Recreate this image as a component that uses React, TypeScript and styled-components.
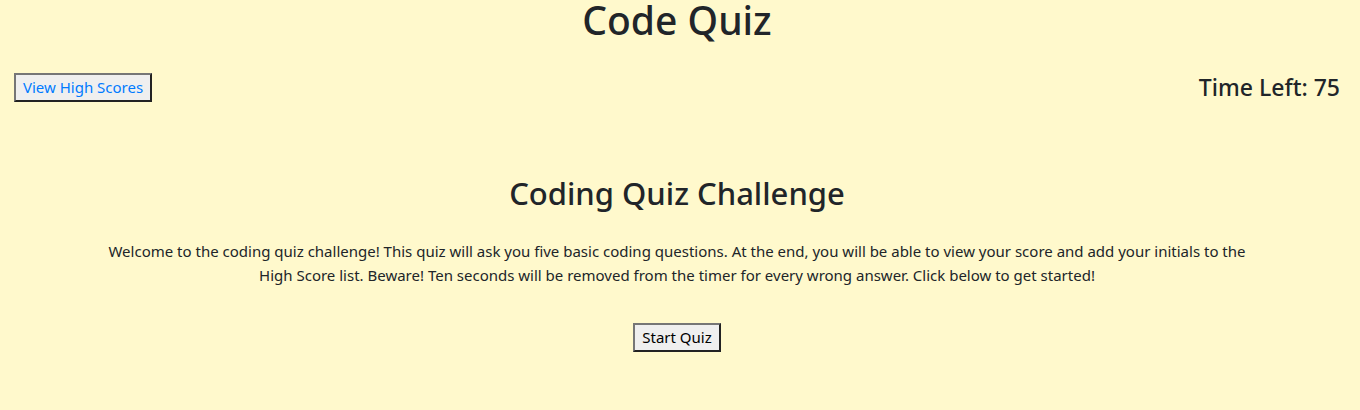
import React from "react";
import styled, { createGlobalStyle } from "styled-components";

const Global = createGlobalStyle`
  html, body {
    margin: 0;
    padding: 0;
    background: #fff9cc;
  }
  body {
    font-family: "Noto Sans", "Open Sans", sans-serif;
    color: #212529;
    font-size: 16px;
  }
`;

const Page = styled.div`
  background: #fff9cc;
  min-height: 410px;
  padding-right: 6px;
  display: flex;
  flex-direction: column;
  align-items: stretch;
`;

const Title = styled.h1`
  margin: 0;
  padding-top: 4px;
  font-size: 39px;
  line-height: 32px;
  font-weight: 500;
  text-align: center;
`;

const TopBar = styled.div`
  margin-top: 37px;
  padding: 0 14px;
  height: 29px;
  display: flex;
  align-items: center;
  justify-content: space-between;
`;

const Button = styled.button<{ $link?: boolean }>`
  font-family: "Noto Sans", "Open Sans", sans-serif;
  font-size: 15px;
  line-height: 21px;
  padding: 2px 7px;
  background: #efefef;
  color: ${(p) => (p.$link ? "#007bff" : "#000")};
  border: 2px solid;
  border-color: #767676 #222 #222 #767676;
  border-radius: 0;
  cursor: pointer;
`;

const Timer = styled.h3`
  margin: 0;
  font-size: 23px;
  line-height: 29px;
  font-weight: 500;
`;

const Section = styled.main`
  margin-top: 72px;
  display: flex;
  flex-direction: column;
  align-items: center;
`;

const Heading = styled.h2`
  margin: 0;
  font-size: 31px;
  line-height: 38px;
  font-weight: 500;
  text-align: center;
`;

const Intro = styled.p`
  margin: 27px 0 0;
  max-width: 1160px;
  font-size: 15px;
  line-height: 24px;
  text-align: center;
`;

const StartRow = styled.div`
  margin-top: 36px;
  display: flex;
  justify-content: center;
`;

export default function App() {
  return (
    <Page>
      <Global />
      <Title>Code Quiz</Title>
      <TopBar>
        <Button $link>View High Scores</Button>
        <Timer>Time Left: 75</Timer>
      </TopBar>
      <Section>
        <Heading>Coding Quiz Challenge</Heading>
        <Intro>
          Welcome to the coding quiz challenge! This quiz will ask you five basic coding questions. At the end, you will be able to view your score and add your initials to the High Score list. Beware! Ten seconds will be removed from the timer for every wrong answer. Click below to get started!
        </Intro>
        <StartRow>
          <Button>Start Quiz</Button>
        </StartRow>
      </Section>
    </Page>
  );
}
